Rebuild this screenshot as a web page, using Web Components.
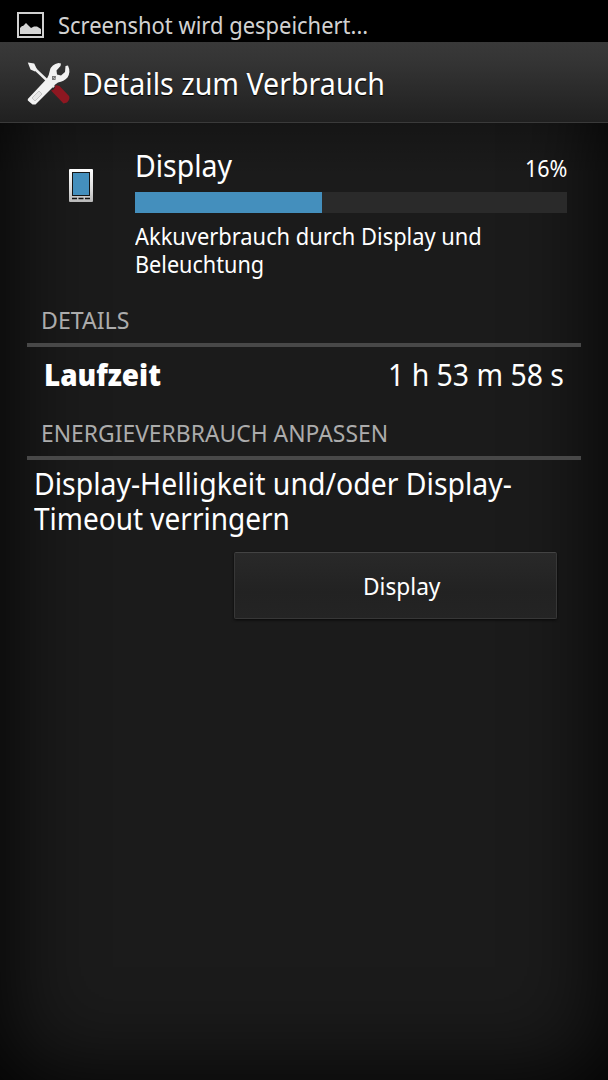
<!DOCTYPE html>
<html lang="de">
<head>
<meta charset="utf-8">
<title>Details zum Verbrauch</title>
<style>
html,body{margin:0;height:100%;background:#000}
body{font-family:"Noto Sans","Open Sans",sans-serif;color:#fff;overflow:hidden}
</style>
</head>
<body>
<usage-screen></usage-screen>
<script>
const define=(name,html,setup)=>customElements.define(name,class extends HTMLElement{
  connectedCallback(){
    if(this.shadowRoot)return;
    const root=this.attachShadow({mode:'open'});
    root.innerHTML=html;
    if(setup)setup.call(this,root);
  }
});

// Text whose widest line is condensed to a given advance width.
define('fit-text',`<style>
:host{display:block;flex:none;white-space:nowrap;overflow:visible}
span{display:inline-block;transform-origin:0 50%;vertical-align:top}
</style><span><slot></slot></span>`,function(root){
  const w=+this.getAttribute('width'),s=root.querySelector('span');
  this.style.width=w+'px';
  this.style.fontSize=this.getAttribute('size')+'px';
  this.style.lineHeight=this.getAttribute('line')+'px';
  s.style.transform='scaleX('+w/s.offsetWidth+')';
});

define('status-bar',`<style>
:host{display:flex;height:42px;box-sizing:border-box;padding:8px 0 0 17px;background:#000;color:#d2d2d2}
svg{display:block;margin:4px 14px 0 0}
</style>
<svg width="27" height="26" viewBox="0 0 27 26"><rect x="1" y="1" width="25" height="24" fill="#000" stroke="#d0d0d0" stroke-width="2"/><path d="M3 22V16L5 14 6 14 9 11 12 14 14 16 17 14.500 20 14.500 24 17V22Z" fill="#d4d4d4"/></svg>
<fit-text width="310" size="23" line="34">Screenshot wird gespeichert...</fit-text>`);

define('tools-icon',`<style>:host{display:block;width:44px;height:44px}svg{display:block}</style>
<svg width="44" height="44" viewBox="0 0 44 44">
<path d="M8 8 27 26" stroke="#eee" stroke-width="2.500"/>
<path d="M.8 1.600 7.200 2.600 9.800 8 8 10.500 3.500 8.500Z" fill="#f1f1f1"/>
<path d="M24 29.500Q28 29 28.500 24L32.500 25 42 35Q43.500 38 40 41.500L36.500 42.500Z" fill="#8e1721"/>
<path d="M.8 38 20 17.500Q22 14.500 23 9Q24.500 3.500 31.500 2L34 2.500 33.500 5 29.500 9.500 30 13.500 34 14.500 38 11 38.500 5 41 4.500Q44 11 40.500 16.500Q37 20.500 31 21.500Q27.500 23.500 24.500 27.500L8.500 43.500 5.500 43.500 .8 39.500Z" fill="#f1f1f1"/>
<path d="m5 37 7-7 3 3-7 7Z" fill="#e6e6e6" stroke="#bcbcbc" stroke-width=".8"/>
<path d="m25 15 4 0-.5 4-3.500 0Z" fill="#777"/><path d="m26 16 2 2" stroke="#ccc" stroke-width=".7"/>
</svg>`);

define('action-bar',`<style>
:host{display:flex;height:81px;box-sizing:border-box;padding:19px 0 0 27px;background:linear-gradient(#393939,#343434 25%,#202020);border-bottom:1px solid #3a3a3a;text-shadow:0 1px 1px #000}
.t{margin:2px 0 0 10.500px}
</style><tools-icon></tools-icon><div class="t"><slot></slot></div>`);

define('display-icon',`<style>:host{display:block}svg{display:block}</style>
<svg width="24" height="33" viewBox="0 0 24 33"><defs><linearGradient id="g" x2="0" y2="1"><stop stop-color="#fff"/><stop offset=".6" stop-color="#ddd"/><stop offset="1" stop-color="#b8b8b8"/></linearGradient></defs>
<rect width="24" height="33" rx="1" fill="url(#g)"/><rect x="3.500" y="3.500" width="17" height="23" fill="#448fbd" stroke="#151515"/><path d="M3 29.500H8M9.500 29.500H14.500M16 29.500H21" stroke="#111" stroke-width="1.400"/></svg>`);

define('usage-meter',`<style>
:host{display:block;height:21px;background:#2a2a2a}
div{height:100%;background:#448fbd}
</style><div></div>`,function(root){root.querySelector('div').style.width=this.getAttribute('fill')+'px'});

define('usage-item',`<style>
:host{display:grid;grid-template-columns:65px 433px;margin-left:69px}
display-icon{margin-top:18px}
.head{display:flex;justify-content:space-between;height:41px}
.head fit-text:first-child{margin:0 0 0 .8px}
.head fit-text+fit-text{margin:3px 0 0}
usage-meter{margin:0 0 9px 1px}
.copy{margin-left:.7px}
</style><display-icon></display-icon>
<div><div class="head"><fit-text width="97" size="30.500" line="28">Display</fit-text><fit-text width="42" size="23" line="28">16%</fit-text></div>
<usage-meter fill="187"></usage-meter>
<div class="copy"><fit-text width="347" size="23" line="28">Akkuverbrauch durch Display und</fit-text><fit-text width="129" size="23" line="28">Beleuchtung</fit-text></div></div>`);

define('section-head',`<style>
:host{display:block;margin:0 27px;padding:0 14px 8px;border-bottom:4px solid #484848;color:#acacac}
</style><slot></slot>`);

define('detail-row',`<style>
:host{display:flex;justify-content:space-between;height:71px;box-sizing:border-box;padding:13px 44px 0}
::slotted([slot=value]){margin-top:-1px}
</style><slot name="label"></slot><slot name="value"></slot>`);

define('push-button',`<style>
:host{display:block}
button{all:unset;display:flex;align-items:center;justify-content:center;width:323px;height:67px;padding:0 0 0 11px;box-sizing:border-box;color:#fff;border:1px solid #373737;border-top-color:#434343;border-radius:2px;background:linear-gradient(#292929,#222 60%,#242424);box-shadow:0 1px 3px #080808}
</style><button><slot></slot></button>`);

define('usage-screen',`<style>
:host{display:flex;flex-direction:column;height:1080px;width:608px;
background:linear-gradient(rgba(0,0,0,.22) 122px,rgba(0,0,0,0) 175px),#1b1b1b;box-shadow:inset 0 0 95px #000}
main{display:flex;flex-direction:column;padding-top:28px}
usage-item{margin-bottom:27px}
.tip{margin:6px 0 0 33.500px}
push-button{margin:16px 0 0 234px}
</style>
<status-bar></status-bar>
<action-bar><fit-text width="302.500" size="31" line="40">Details zum Verbrauch</fit-text></action-bar>
<main>
<usage-item></usage-item>
<section-head><fit-text width="88.500" size="23" line="30">DETAILS</fit-text></section-head>
<detail-row><fit-text slot="label" style="font-weight:900" width="117" size="30" line="30">Laufzeit</fit-text><fit-text slot="value" width="176" size="30.500" line="30">1 h 53 m 58 s</fit-text></detail-row>
<section-head><fit-text width="347" size="23" line="30">ENERGIEVERBRAUCH ANPASSEN</fit-text></section-head>
<div class="tip"><fit-text width="478" size="30.500" line="35">Display-Helligkeit und/oder Display-</fit-text><fit-text width="256" size="30.500" line="35">Timeout verringern</fit-text></div>
<push-button><fit-text width="77" size="23" line="30">Display</fit-text></push-button>
</main>`);
</script>
</body>
</html>
